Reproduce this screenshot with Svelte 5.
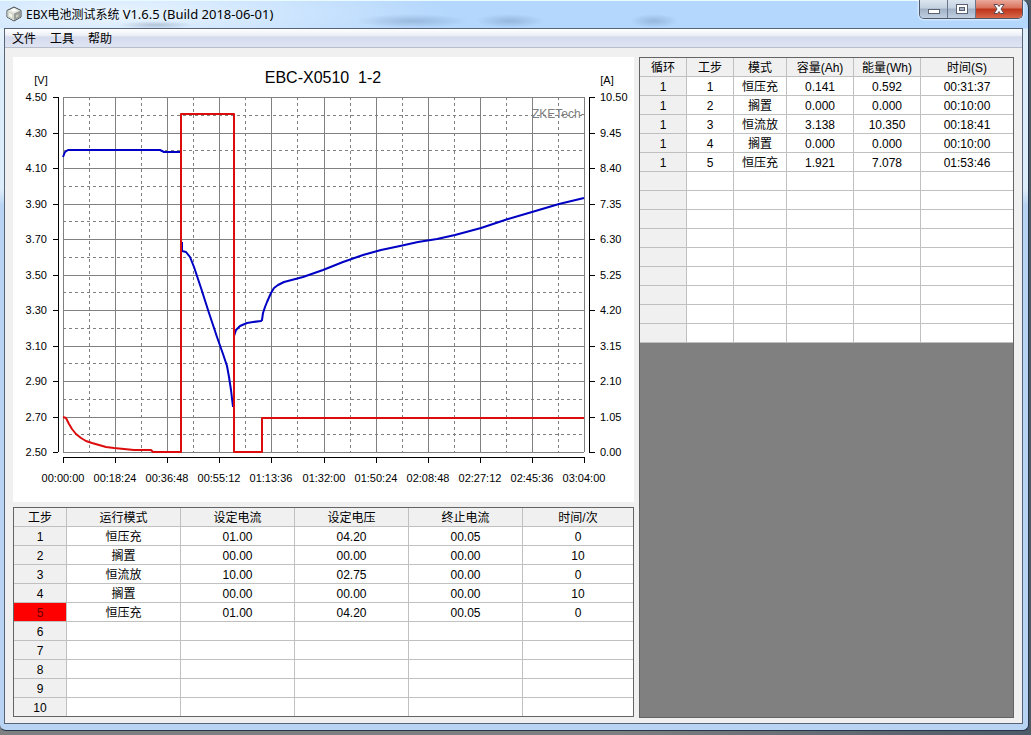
<script>
	const menus = ['文件', '工具', '帮助'];

	const volts = ['4.50', '4.30', '4.10', '3.90', '3.70', '3.50', '3.30', '3.10', '2.90', '2.70', '2.50'];
	const amps = ['10.50', '9.45', '8.40', '7.35', '6.30', '5.25', '4.20', '3.15', '2.10', '1.05', '0.00'];
	const times = ['00:00:00', '00:18:24', '00:36:48', '00:55:12', '01:13:36', '01:32:00', '01:50:24', '02:08:48', '02:27:12', '02:45:36', '03:04:00'];

	// plot area, with ten divisions each way
	const plotW = 521;
	const plotH = 355;
	const gridX = (i) => Math.round((i * plotW) / 10);
	const gridY = (i) => Math.round((i * plotH) / 10);
	const steps = [0, 1, 2, 3, 4, 5, 6, 7, 8, 9, 10];
	const halves = steps.slice(0, 10).map((i) => i + 0.5);

	const voltage = [
		'0,60 2,55 5,53 97,53 101,55 118,55',
		'119,145 119,154 123,155 127,160 131,170 138,191 146,216 154,240 160,257 164,269 166,280 168,293 170,310',
		'171,245 171,239 173,233 177,229 184,226 190,225 198,224 199,223 200,216 202,210 204,205 208,196 211,191 215,188 221,185 240,180 260,173 280,165 300,158 318,153 337,149 355,145 374,142 392,138 418,131 445,122 469,115 496,107 521,101'
	];
	const current = '0,320 3,321 6,327 9,332 13,337 18,341 23,344 29,346 36,348 43,350 51,351 71,353 88,353 90,355 118,355 118,17 171,17 171,355 199,355 199,321 521,321';

	const setup = {
		cols: [
			['工步', 53],
			['运行模式', 114],
			['设定电流', 114],
			['设定电压', 114],
			['终止电流', 114],
			['时间/次', 110]
		],
		rows: [
			['1', '恒压充', '01.00', '04.20', '00.05', '0'],
			['2', '搁置', '00.00', '00.00', '00.00', '10'],
			['3', '恒流放', '10.00', '02.75', '00.00', '0'],
			['4', '搁置', '00.00', '00.00', '00.00', '10'],
			['5', '恒压充', '01.00', '04.20', '00.05', '0'],
			['6', '', '', '', '', ''],
			['7', '', '', '', '', ''],
			['8', '', '', '', '', ''],
			['9', '', '', '', '', ''],
			['10', '', '', '', '', '']
		],
		active: 4
	};

	const blank = ['', '', '', '', '', ''];
	const results = {
		cols: [
			['循环', 47],
			['工步', 47],
			['模式', 53],
			['容量(Ah)', 67],
			['能量(Wh)', 67],
			['时间(S)', 92]
		],
		rows: [
			['1', '1', '恒压充', '0.141', '0.592', '00:31:37'],
			['1', '2', '搁置', '0.000', '0.000', '00:10:00'],
			['1', '3', '恒流放', '3.138', '10.350', '00:18:41'],
			['1', '4', '搁置', '0.000', '0.000', '00:10:00'],
			['1', '5', '恒压充', '1.921', '7.078', '01:53:46'],
			...Array(9).fill(blank)
		],
		active: -1
	};

	const total = (cols) => cols.reduce((sum, c) => sum + c[1], 0);
</script>

{#snippet sheet(data)}
	<table>
		<colgroup>
			{#each data.cols as col}
				<col style="width: {(col[1] / total(data.cols)) * 100}%" />
			{/each}
		</colgroup>
		<thead>
			<tr>
				{#each data.cols as col}
					<th scope="col">{col[0]}</th>
				{/each}
			</tr>
		</thead>
		<tbody>
			{#each data.rows as row, i}
				<tr class:active={i === data.active}>
					{#each row as cell}
						<td>{cell}</td>
					{/each}
				</tr>
			{/each}
		</tbody>
	</table>
{/snippet}

<div class="window">
	<header>
		<svg class="logo" viewBox="0 0 16 16" width="16" height="16" aria-hidden="true">
			<path d="M8 1 L15 4.5 V11 L8 15 L1 11 V4.5 Z" fill="#e9ebe4" stroke="#3d4247" stroke-width="1" />
			<path d="M1.5 4.5 L8 7.5 V14.5 L1.5 11 Z" fill="#d3d7cd" />
			<path d="M8 7.5 L14.5 4.5 V11 L8 14.5 Z" fill="#989d98" />
			<path d="M3 7 L6 8.5 V11.5 L3 10 Z" fill="#f7f8ec" />
			<path d="M5 4 L8 2.5 L11 4 L8 5.5 Z" fill="#fff" />
			<path d="M10 9 L12.5 8 V10.5 L10 12 Z" fill="#c7c9be" />
		</svg>
		<h1>EBX电池测试系统 <span>V1.6.5 (Build 2018-06-01)</span></h1>
		<div class="controls">
			<button class="min" aria-label="最小化">
				<svg viewBox="0 0 14 12" width="14" height="12"><rect x="1.5" y="6.5" width="11" height="4" fill="#fff" stroke="#596273" /></svg>
			</button>
			<button class="max" aria-label="最大化">
				<svg viewBox="0 0 14 12" width="14" height="12">
					<rect x="1.5" y="1.5" width="11" height="9" fill="#fff" stroke="#596273" />
					<rect x="4.5" y="4.5" width="5" height="3" fill="#aab4c2" stroke="#596273" />
				</svg>
			</button>
			<button class="close" aria-label="关闭">
				<svg viewBox="0 0 14 12" width="14" height="12">
					<path d="M2 1.5 H5.5 L7 3.5 L8.5 1.5 H12 L9 6 L12 10.5 H8.5 L7 8.5 L5.5 10.5 H2 L5 6 Z" fill="#fff" stroke="#5a4a55" />
				</svg>
			</button>
		</div>
	</header>

	<div class="client">
		<nav>
			{#each menus as menu}
				<button>{menu}</button>
			{/each}
		</nav>

		<main>
			<div class="left">
				<svg class="chart" viewBox="0 0 621 445" role="img" aria-label="EBC-X0510 1-2">
					<text class="title" x="310" y="26" text-anchor="middle">EBC-X0510&nbsp; 1-2</text>
					<text x="28" y="27" text-anchor="middle">[V]</text>
					<text x="594" y="27" text-anchor="middle">[A]</text>

					<g transform="translate(50 40)">
						<g class="grid">
							{#each steps as i}
								<line x1={gridX(i)} x2={gridX(i)} y1="0" y2={plotH} />
								<line x1="0" x2={plotW} y1={gridY(i)} y2={gridY(i)} />
							{/each}
						</g>
						<g class="grid dashed">
							{#each halves as i}
								<line x1={gridX(i)} x2={gridX(i)} y1="0" y2={plotH} />
								<line x1="0" x2={plotW} y1={gridY(i)} y2={gridY(i)} />
							{/each}
						</g>
						<text class="brand" x="469" y="21">ZKETech-</text>

						<g class="axis">
							<path d="M-5 0 V{plotH} M526 0 V{plotH} M0 360 H{plotW}" />
							{#each steps as i}
								<path d="M-10 {gridY(i)} H-5 M526 {gridY(i)} H532 M{gridX(i)} 360 V366" />
							{/each}
						</g>
						{#each steps as i}
							<text x="-16" y={gridY(i) + 4} text-anchor="end">{volts[i]}</text>
							<text x="537" y={gridY(i) + 4}>{amps[i]}</text>
							<text x={gridX(i)} y="385" text-anchor="middle">{times[i]}</text>
						{/each}

						{#each voltage as points}
							<polyline class="voltage" {points} />
						{/each}
						<polyline class="current" points={current} />
					</g>
				</svg>

				<section class="setup">
					{@render sheet(setup)}
				</section>
			</div>

			<section class="results">
				{@render sheet(results)}
			</section>
		</main>
	</div>
</div>

<style>
	:global(body) {
		margin: 0;
		background: linear-gradient(90deg, #7d7f80 0, #7d7f80 60%, #4d5a68 100%);
		font-family: 'Liberation Sans', 'Noto Sans CJK SC', sans-serif;
		font-size: 12px;
		color: #000;
	}

	.window {
		display: flex;
		flex-direction: column;
		box-sizing: border-box;
		min-height: calc(100vh - 4px);
		margin: 0 2px 4px 0;
		padding: 0 5px 6px 4px;
		border: 1px solid #27364a;
		border-width: 0 1px 1px 0;
		border-radius: 0 8px 6px 6px;
		background:
			radial-gradient(ellipse 56px 7px at 412px 21px, rgba(70, 100, 140, 0.28), transparent),
			radial-gradient(ellipse 34px 7px at 510px 21px, rgba(70, 100, 140, 0.28), transparent),
			radial-gradient(ellipse 24px 7px at 654px 21px, rgba(70, 100, 140, 0.28), transparent),
			radial-gradient(ellipse 38px 4px at 156px 25px, rgba(50, 70, 100, 0.25), transparent),
			radial-gradient(ellipse 340px 50px at 110px 14px, rgba(244, 250, 255, 0.85), transparent),
			linear-gradient(#b4d7fd 0, #b4d7fd 28px, #dcecf8 29px, #dcecf8 190px, #b9d4f3 205px);
		box-shadow: inset 0 1px 0 #e9fbff;
	}

	header {
		display: flex;
		align-items: flex-start;
		height: 28px;
		padding-left: 2px;
	}

	.logo {
		margin-top: 6px;
	}

	h1 {
		flex: 1;
		margin: 0 0 0 4px;
		font: 12px/28px 'Noto Sans', 'Noto Sans CJK SC', sans-serif;
	}

	h1 span {
		font-size: 13px;
	}

	.controls {
		display: flex;
		box-sizing: border-box;
		height: 19px;
		border: 1px solid #4c586b;
		border-top: 0;
		border-radius: 0 0 5px 5px;
		overflow: hidden;
		box-shadow: 0 0 2px 1px rgba(255, 255, 255, 0.6);
	}

	.controls button {
		display: flex;
		align-items: center;
		justify-content: center;
		width: 28px;
		padding: 0;
		border: 0;
		border-right: 1px solid #68758a;
		background: linear-gradient(#dbe5ef 0, #c3d0df 45%, #a2b1c5 50%, #c0d0e2 100%);
	}

	.controls .close {
		width: 46px;
		border-right: 0;
		background: linear-gradient(#eaa99b 0, #d9705c 45%, #bd3318 50%, #d9684a 100%);
	}

	.client {
		display: flex;
		flex: 1;
		flex-direction: column;
		border: 1px solid #566379;
		background: #f0f0f0;
	}

	nav {
		display: flex;
		gap: 14px;
		height: 18px;
		padding: 0 7px;
		border-bottom: 1px solid #b8bdcb;
		background: linear-gradient(#fff 0, #eceff7 35%, #d5dbec 45%, #dfe4f3 100%);
	}

	nav button {
		padding: 0;
		border: 0;
		background: none;
		font: inherit;
		line-height: 20px;
		color: inherit;
	}

	main {
		display: grid;
		flex: 1;
		grid-template-columns: minmax(0, 621fr) minmax(0, 375fr);
		gap: 5px;
		padding: 9px 8px 5px;
	}

	.chart {
		display: block;
		width: 100%;
		margin-bottom: 5px;
		background: #fff;
	}

	.chart text {
		font-size: 11px;
	}

	.chart .title {
		font-size: 16px;
	}

	.chart .brand {
		font-size: 12px;
		fill: #808080;
	}

	.grid line {
		stroke: #808080;
		shape-rendering: crispEdges;
	}

	.dashed line {
		stroke-dasharray: 3 3;
	}

	.axis path {
		fill: none;
		stroke: #000;
		shape-rendering: crispEdges;
	}

	polyline {
		fill: none;
		stroke-width: 2;
		stroke-linejoin: round;
	}

	.voltage {
		stroke: #0000c4;
	}

	.current {
		stroke: #dc0c0c;
	}

	.setup,
	.results {
		border: 1px solid #646464;
	}

	.results {
		background: #808080;
	}

	table {
		width: 100%;
		table-layout: fixed;
		border-collapse: separate;
		border-spacing: 0;
		background: #fff;
	}

	th,
	td {
		box-sizing: border-box;
		height: 19px;
		padding: 2px 0 0;
		border: 1px solid #c0c0c0;
		border-width: 0 1px 1px 0;
		font-weight: normal;
		line-height: 16px;
		text-align: center;
		white-space: nowrap;
	}

	th:last-child,
	td:last-child {
		border-right: 0;
	}

	th,
	td:first-child {
		background: #f0f0f0;
	}

	.active td:first-child {
		background: #f00;
		color: #600;
	}

	.setup tbody tr:last-child td {
		height: 18px;
		border-bottom: 0;
	}
</style>
